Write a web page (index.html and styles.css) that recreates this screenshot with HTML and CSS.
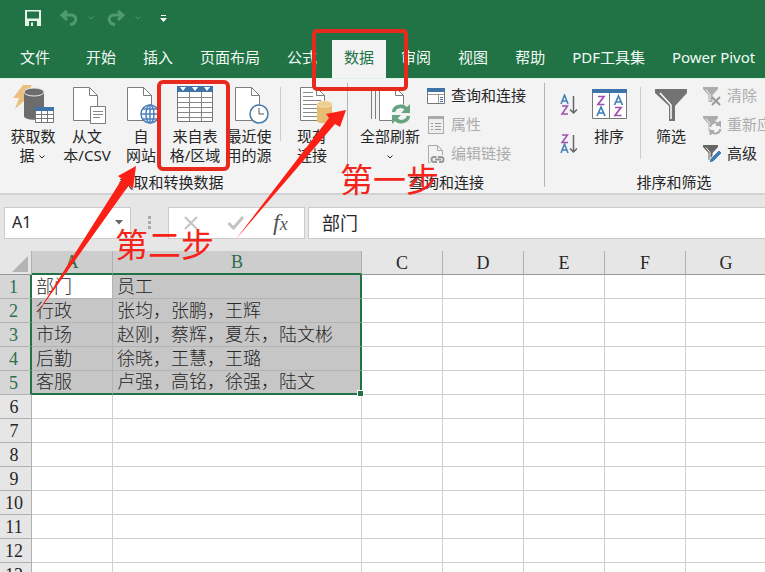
FILE: index.html
```
<!DOCTYPE html>
<html lang="zh-CN">
<head>
<meta charset="utf-8">
<title>Excel</title>
<link rel="stylesheet" href="styles.css">
</head>
<body>
<svg class="defs" aria-hidden="true">
  <symbol id="page" viewBox="0 0 42 40"><path d="M7.500 3.500h16l8 8v25h-24z" fill="#fff" stroke="#7d7d7d"/><path d="M23.500 3.500v8h8" fill="none" stroke="#7d7d7d"/></symbol>
  <symbol id="chev" viewBox="0 0 8 6"><path d="M1.500 1.500 4 4l2.500-2.500" fill="none" stroke="currentColor"/></symbol>
  <symbol id="funnel" viewBox="0 0 20 20"><path d="M1 1h15v2l-5.500 6v7h-4V9L1 3z" fill="currentColor"/><path d="M4 3.500 8 8.500V15" fill="none" stroke="#f3f3f3"/></symbol>
</svg>

<header class="top">
  <div class="quick">
    <button aria-label="保存"><svg width="18" height="18" viewBox="0 0 18 18"><path d="M1 1h16v16H1z" fill="#e6f6ea"/><path d="M3 2.500h12v7H3zM5 12h8v5H5z" fill="#217346"/><path d="M7 13.500h2V17H7z" fill="#e6f6ea"/></svg></button>
    <button class="dim undo" aria-label="撤销"><svg width="20" height="18" viewBox="0 0 20 18"><path d="M8 2 3 6l5 5M3.500 6H12c7 0 6 9-1 9.500" fill="none" stroke="currentColor" stroke-width="3"/></svg></button>
    <button class="dim" aria-label="撤销选项"><svg width="8" height="6"><use href="#chev"/></svg></button>
    <button class="dim redo" aria-label="恢复"><svg width="20" height="18" viewBox="0 0 20 18"><path d="M12 2l5 4-5 5M16.500 6H8c-7 0-6 9 1 9.500" fill="none" stroke="currentColor" stroke-width="3"/></svg></button>
    <button class="dim" aria-label="恢复选项"><svg width="8" height="6"><use href="#chev"/></svg></button>
    <button class="custom" aria-label="自定义"><svg width="7" height="8" viewBox="0 0 7 8"><path d="M1 1.500h5" stroke="#fff"/><path d="M0 4h7L3.500 8z" fill="#fff"/></svg></button>
  </div>
  <nav class="tabs">
    <a href="#" class="file">文件</a><a href="#">开始</a><a href="#">插入</a><a href="#">页面布局</a><a href="#">公式</a><a href="#" class="active">数据</a><a href="#">审阅</a><a href="#">视图</a><a href="#">帮助</a><a href="#">PDF工具集</a><a href="#">Power Pivot</a>
  </nav>
</header>

<section class="ribbon">
  <div class="group get">
    <div class="tools">
      <button class="big"><svg width="42" height="40" viewBox="0 0 42 40"><path d="M11 1h9l-6 10h5L3 25l4-11H1z" fill="#ecc080"/><path d="M12 8v24c0 5 20 5 20 0V8z" fill="#6c6c6c"/><ellipse cx="22" cy="8" rx="10" ry="4" fill="#6c6c6c" stroke="#e8e8e8"/><path d="M23.500 23.500h18v15h-18z" fill="#fff" stroke="#777"/><path d="M23 23h19v4H23z" fill="#3f74a8"/><path d="M24 30.500h17M24 34.500h17M29.500 27v12M35.500 27v12" stroke="#777"/></svg><span>获取数<br>据 <svg width="8" height="6"><use href="#chev"/></svg></span></button>
      <button class="big"><svg width="42" height="40" viewBox="0 0 42 40"><use href="#page"/><path d="M24.500 22.500h15v17h-15z" fill="#fff" stroke="#7d7d7d"/><path d="M27 27.500h10M27 30.500h10M27 33.500h7" stroke="#888"/></svg><span>从文<br>本/CSV</span></button>
      <button class="big"><svg width="42" height="40" viewBox="0 0 42 40"><use href="#page"/><g fill="none" stroke="#4a80bd" stroke-width="1.500"><circle cx="30" cy="30" r="9" fill="#fff"/><ellipse cx="30" cy="30" rx="4" ry="9"/><path d="M21 30h18M30 21v18M23 25h14M23 35h14"/></g></svg><span>自<br>网站</span></button>
      <button class="big"><svg width="42" height="40" viewBox="0 0 42 40"><path d="M3.500 3.500h35v34h-35z" fill="#fff" stroke="#777"/><path d="M3 2h36v6H3z" fill="#3f74a8"/><path d="M6 3h6l-3 4zM18 3h6l-3 4zM30 3h6l-3 4z" fill="#fff"/><path d="M4 13.500h34M4 18.500h34M4 23.500h34M4 28.500h34M4 33.500h34M15.500 8v29M27.500 8v29" stroke="#888"/></svg><span>来自表<br>格/区域</span></button>
      <button class="big"><svg width="42" height="40" viewBox="0 0 42 40"><use href="#page"/><circle cx="31" cy="30" r="9" fill="#fff" stroke="#477aa8" stroke-width="1.500"/><path d="M31 24v6h5" fill="none" stroke="#555"/></svg><span>最近使<br>用的源</span></button>
      <i class="rule"></i>
      <button class="big"><svg width="42" height="40" viewBox="0 0 42 40"><use href="#page" x="2"/><path d="M12 8.500h10M12 12.500h10M12 16.500h18M12 20.500h18M12 24.500h14M12 28.500h14M12 32.500h14" stroke="#888"/><path d="M26 20v17c0 3 15 3 15 0V20z" fill="#e6bd72"/><ellipse cx="33.500" cy="20" rx="7.500" ry="3" fill="#edcd90" stroke="#f3e3bd"/></svg><span>现有<br>连接</span></button>
    </div>
    <h2>获取和转换数据</h2>
  </div>
  <div class="group query">
    <div class="tools">
      <button class="big refresh"><svg width="42" height="40" viewBox="0 0 42 40"><path d="M2.500 35V3.500H8M6.500 35V3.500H12" fill="none" stroke="#7d7d7d"/><use href="#page" x="3"/><circle cx="32" cy="30" r="10" fill="#f3f3f3"/><path d="M24.500 28c1-6 10-8 13.500-2M39.500 32c-1 6-10 8-13.500 2" fill="none" stroke="#67a283" stroke-width="3.500"/><path d="M41 20v9h-9zM23 40v-9h9z" fill="#67a283"/></svg><span>全部刷新<br><svg width="8" height="6"><use href="#chev"/></svg></span></button>
      <div class="stack">
        <button><svg width="20" height="20" viewBox="0 0 20 20"><path d="M1.500 2.500h17v15h-17z" fill="#fff" stroke="#777"/><path d="M1 2h18v4H1z" fill="#3f74a8"/><path d="M2 8.500h16M12.500 9v8" stroke="#999"/><path d="M14 11.500h3M14 13.500h3M14 15.500h3" stroke="#3f74a8"/></svg>查询和连接</button>
        <button disabled><svg width="20" height="20" viewBox="0 0 20 20"><path d="M2.500 1.500h15v17h-15z" fill="#eee" stroke="#aaa"/><path d="M2 1h16v3H2z" fill="#aaa"/><path d="M5 8.500h2M9 8.500h6M5 11.500h2M9 11.500h6M5 14.500h2M9 14.500h6" stroke="#999"/></svg>属性</button>
        <button disabled><svg width="20" height="20" viewBox="0 0 20 20"><path d="M4 18.500H2.500v-17h9l5 5V11M11.500 1.500v5h5" fill="none" stroke="#aaa"/><path d="M11 18H8a2.500 2.500 0 0 1 0-5h2.500M12 13h3a2.500 2.500 0 0 1 0 5h-2M9 15.500h6" fill="none" stroke="#999" stroke-width="2"/></svg>编辑链接</button>
      </div>
    </div>
    <h2>查询和连接</h2>
  </div>
  <div class="group sort">
    <div class="tools">
      <div class="order">
        <button aria-label="升序"><svg width="18" height="22" viewBox="0 0 18 22"><path d="M1 10 4.500 1 8 10M2.500 7h4" fill="none" stroke="#3f7fb5" stroke-width="1.500"/><path d="M2 12h5.500L2 20h6" fill="none" stroke="#a04fb0" stroke-width="1.500"/><path d="M13.500 2v17M10 15.500l3.500 3.500 3.500-3.500" fill="none" stroke="#666" stroke-width="1.500"/></svg></button>
        <button aria-label="降序"><svg width="18" height="22" viewBox="0 0 18 22"><path d="M2 2h5.500L2 9.500h6" fill="none" stroke="#a04fb0" stroke-width="1.500"/><path d="M1 20l3.500-9L8 20M2.500 17h4" fill="none" stroke="#3f7fb5" stroke-width="1.500"/><path d="M13.500 2v17M10 15.500l3.500 3.500 3.500-3.500" fill="none" stroke="#666" stroke-width="1.500"/></svg></button>
      </div>
      <button class="big"><svg width="42" height="40" viewBox="0 0 42 40"><path d="M4.500 5.500h34v29h-34z" fill="#fff" stroke="#777"/><path d="M4 5h35v4H4z" fill="#3f74a8"/><path d="M21.500 9v26" stroke="#777"/><g fill="none" stroke-width="1.700"><path d="M10 12.500h6l-6 8h6.500M27 23.500h6l-6 8h6.500" stroke="#a04fb0"/><path d="M9 32l4-9 4 9M10.500 29h5M26.500 21l4-9 4 9M28 18h5" stroke="#3f7fb5"/></g></svg><span>排序</span></button>
      <i class="rule tall"></i>
      <button class="big"><svg width="42" height="40" viewBox="0 0 42 40"><path d="M5 5h32v4L25 22v15h-6V22L5 9z" fill="#737373"/><path d="M10 9l11 12v14" fill="none" stroke="#fff" stroke-width="1.500"/></svg><span>筛选</span></button>
      <div class="stack">
        <button disabled><svg width="20" height="20" viewBox="0 0 20 20"><use href="#funnel"/><path d="M10 11l8 8M18 11l-8 8" stroke="#999" stroke-width="2"/></svg>清除</button>
        <button disabled><svg width="20" height="20" viewBox="0 0 20 20"><use href="#funnel"/><circle cx="13" cy="13" r="6" fill="#f3f3f3"/><path d="M8 12c1-5 7-6 10-2V6M18.500 14c-1 5-7 6-10 2v4M18.500 10H14M8 16h4" fill="none" stroke="#aaa" stroke-width="2"/></svg>重新应用</button>
        <button class="adv"><svg width="20" height="20" viewBox="0 0 20 20"><use href="#funnel"/><path d="M7 19l1-4 9-9 3 3-9 9z" fill="#3f7fb5" stroke="#f3f3f3"/></svg>高级</button>
      </div>
    </div>
    <h2>排序和筛选</h2>
  </div>
</section>

<section class="formula">
  <div class="box name"><input aria-label="名称框" value="A1"><svg width="8" height="5" viewBox="0 0 8 5"><path d="M0 0h8L4 4.500z" fill="#666"/></svg></div>
  <svg class="dots" width="4" height="16" viewBox="0 0 4 16"><path d="M0 1h3v3H0zM0 6h3v3H0zM0 11h3v3H0z" fill="#aaa"/></svg>
  <div class="box acts">
    <button aria-label="取消"><svg width="16" height="16" viewBox="0 0 16 16"><path d="M2 2l12 12M14 2 2 14" stroke="#c3c3c3" stroke-width="2"/></svg></button>
    <button aria-label="输入"><svg width="18" height="16" viewBox="0 0 18 16"><path d="M1.500 8l5 5L16 2" fill="none" stroke="#c3c3c3" stroke-width="3"/></svg></button>
    <button class="fx" aria-label="插入函数">f<small>x</small></button>
  </div>
  <div class="box value"><input aria-label="编辑栏" value="部门"></div>
</section>

<main class="sheet">
  <table>
    <colgroup><col class="c0"><col class="ca"><col class="cb"><col class="cx"><col class="cx"><col class="cx"><col class="cx"><col class="cx"></colgroup>
    <thead><tr><th><svg class="corner" width="16" height="16" viewBox="0 0 16 16"><path d="M16 0v16H0z" fill="#b4b4b4"/></svg></th><th class="on">A</th><th class="on">B</th><th>C</th><th>D</th><th>E</th><th>F</th><th>G</th></tr></thead>
    <tbody>
      <tr class="sel"><th>1</th><td class="cur">部门</td><td>员工</td><td></td><td></td><td></td><td></td><td></td></tr>
      <tr class="sel"><th>2</th><td>行政</td><td>张均，张鹏，王辉</td><td></td><td></td><td></td><td></td><td></td></tr>
      <tr class="sel"><th>3</th><td>市场</td><td>赵刚，蔡辉，夏东，陆文彬</td><td></td><td></td><td></td><td></td><td></td></tr>
      <tr class="sel"><th>4</th><td>后勤</td><td>徐晓，王慧，王璐</td><td></td><td></td><td></td><td></td><td></td></tr>
      <tr class="sel last"><th>5</th><td>客服</td><td>卢强，高铭，徐强，陆文<i class="handle"></i></td><td></td><td></td><td></td><td></td><td></td></tr>
      <tr><th>6</th><td></td><td></td><td></td><td></td><td></td><td></td><td></td></tr>
      <tr><th>7</th><td></td><td></td><td></td><td></td><td></td><td></td><td></td></tr>
      <tr><th>8</th><td></td><td></td><td></td><td></td><td></td><td></td><td></td></tr>
      <tr><th>9</th><td></td><td></td><td></td><td></td><td></td><td></td><td></td></tr>
      <tr><th>10</th><td></td><td></td><td></td><td></td><td></td><td></td><td></td></tr>
      <tr><th>11</th><td></td><td></td><td></td><td></td><td></td><td></td><td></td></tr>
      <tr><th>12</th><td></td><td></td><td></td><td></td><td></td><td></td><td></td></tr>
      <tr><th>13</th><td></td><td></td><td></td><td></td><td></td><td></td><td></td></tr>
    </tbody>
  </table>
</main>

<svg class="marks" width="440" height="330" viewBox="0 0 440 330" aria-hidden="true">
  <g fill="none" stroke="#e8291d" stroke-width="4"><rect x="314" y="31" width="92" height="58" rx="3"/><rect x="159" y="82" width="69" height="87" rx="4"/></g>
  <path d="M136 166l-18 10 4 3L36 315l93-130 4 4zM346 110l-20 4 3 4-93 121 99-115 5 3z" fill="#fb2015"/>
</svg>
<p class="note one">第一步</p>
<p class="note two">第二步</p>
</body>
</html>
```
FILE: styles.css
```
* { box-sizing: border-box; }
body {
  margin: 0;
  height: 100vh;
  overflow: hidden;
  position: relative;
  background: #fff;
  color: #262626;
  font: 15px/19px "Noto Sans", "Noto Sans CJK SC", sans-serif;
}
button, input { font: inherit; color: inherit; border: 0; padding: 0; background: none; }
svg { display: block; flex: none; }
.defs { position: absolute; width: 0; height: 0; }

.top { background: #217346; color: #f2faf4; }
.quick { display: flex; align-items: center; height: 36px; padding: 0 24px; }
.quick .dim { color: #4f9a6e; }
.quick .undo { margin: 0 8px 0 17px; }
.quick .redo { margin: 0 8px 0 11px; }
.quick .custom { margin-left: 18px; }
.tabs { display: flex; gap: 3px; height: 42px; padding: 4px 0 0 8px; }
.tabs a {
  padding: 0 12px;
  line-height: 34px;
  color: inherit;
  text-decoration: none;
  white-space: nowrap;
}
.tabs .file { margin-right: 9px; }
.tabs .active { background: #f3f3f3; color: #217346; }

.ribbon {
  display: flex;
  height: 117px;
  overflow: hidden;
  background: #f3f3f3;
  border-top: 1px solid #dff5e4;
  border-bottom: 2px solid #d2d2d2;
}
.group { flex: none; position: relative; }
.group::after {
  content: "";
  position: absolute;
  right: 0;
  top: 4px;
  bottom: 6px;
  width: 1px;
  background: #b5b5b5;
}
.get { width: 348px; padding-left: 6px; }
.get h2 { padding-right: 12px; }
.query { width: 197px; }
.sort { width: 258px; }
.tools { display: flex; height: 94px; }
.group h2 { margin: 0; font: inherit; text-align: center; }
.big {
  display: flex;
  flex-direction: column;
  align-items: center;
  gap: 3px;
  flex: none;
  width: 54px;
  padding-top: 5px;
  white-space: nowrap;
}
.big span svg { display: inline-block; vertical-align: middle; }
.refresh { width: 80px; margin-left: 2px; }
.rule { flex: none; width: 1px; height: 54px; margin: 8px 4px 0 4px; background: #ccc; }
.rule.tall { height: 72px; }
.stack { display: flex; flex-direction: column; gap: 10px; padding-top: 7px; }
.query .stack { margin-left: -4px; }
.stack button { display: flex; align-items: center; gap: 5px; height: 19px; white-space: nowrap; }
.stack button:disabled { color: #acacac; }
.adv svg { color: #666; }
.order { display: flex; flex-direction: column; gap: 17px; padding: 15px 4px 0 15px; }
.sort .big { margin-right: 2px; }
.sort .rule { margin: 8px 3px 0 2px; }
.sort .stack { padding-left: 2px; }

.formula { display: flex; align-items: center; height: 56px; padding: 0 0 1px 4px; background: #e6e6e6; }
.box { display: flex; align-items: center; height: 32px; background: #fff; border: 1px solid #cacaca; }
.name { width: 127px; padding: 0 7px; }
.name input { flex: 1; width: 60px; font-size: 16px; }
.dots { margin: 0 16px 0 17px; }
.acts { width: 137px; padding-left: 14px; gap: 28px; }
.fx { font: italic 24px/26px "Liberation Serif", serif; color: #555; }
.fx small { font-size: 18px; }
.value { flex: 1; margin-left: 3px; padding-left: 13px; border-right: 0; }
.value input { width: 100%; font-size: 18px; line-height: 24px; }

.sheet table {
  width: 767px;
  table-layout: fixed;
  border-collapse: separate;
  border-spacing: 0;
  font: 300 18px/22px "Liberation Serif", "Noto Sans CJK SC", serif;
}
.c0 { width: 32px; }
.ca { width: 81px; }
.cb { width: 249px; }
.cx { width: 81px; }
.sheet th, .sheet td {
  height: 24px;
  padding: 0 4px;
  border-right: 1px solid #cfcfcf;
  border-bottom: 1px solid #cfcfcf;
  font-weight: inherit;
  text-align: left;
  white-space: nowrap;
}
.sheet th { padding: 0; background: #e6e6e6; text-align: center; border-color: #b0b0b0; }
.sheet tbody th { padding-right: 3px; }
.sheet thead th { border-bottom-color: #999; }
.sheet thead .on { background: #cdcdcd; color: #2c6e4b; border-bottom: 2px solid #217346; }
.corner { margin: 2px 0 0 12px; }
.sel th { background: #d6d6d6; color: #2c6e4b; border-right: 2px solid #217346; }
.sel td:nth-child(2), .sel td:nth-child(3) { background: #c6c6c6; border-color: #b3b3b3; }
.sel td:nth-child(3) { position: relative; border-right: 2px solid #217346; }
.sel .cur:nth-child(2) { background: #fff; }
.last td:nth-child(2), .last td:nth-child(3) { border-bottom: 2px solid #217346; }
.handle { position: absolute; right: -4px; bottom: -4px; width: 7px; height: 7px; background: #217346; border: 1px solid #fff; }

.marks { position: absolute; left: 0; top: 0; }
.note { position: absolute; margin: 0; color: #f5241a; font-size: 33px; line-height: 36px; }
.one { left: 340px; top: 162px; }
.two { left: 115px; top: 227px; }
```
